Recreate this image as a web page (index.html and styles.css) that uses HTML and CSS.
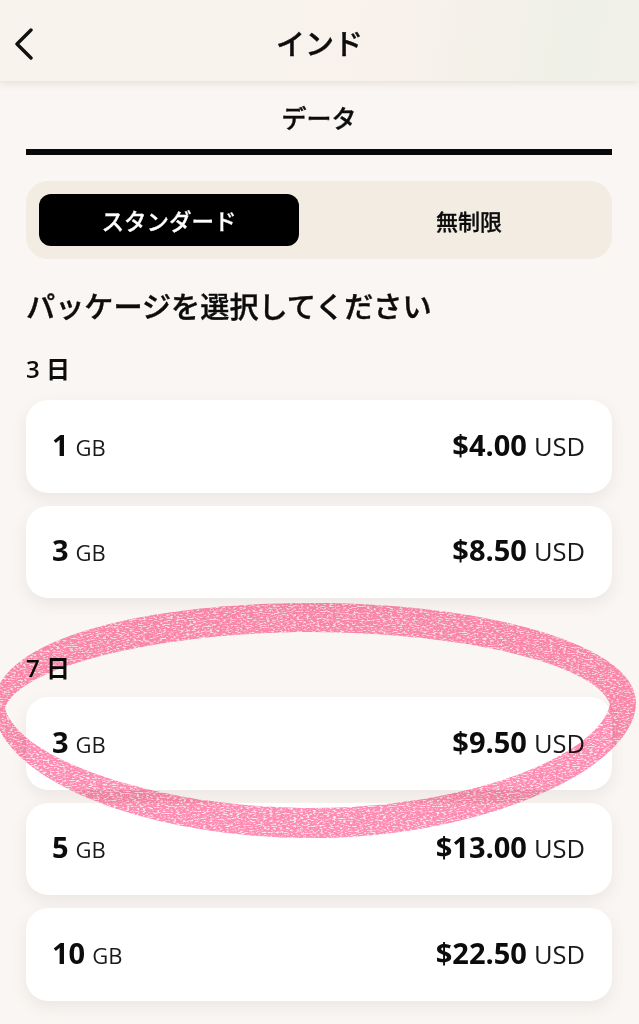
FILE: index.html
```html
<!DOCTYPE html>
<html lang="ja">
<head>
<meta charset="utf-8">
<title>インド</title>
<link rel="stylesheet" href="styles.css">
</head>
<body>
<div class="page">
  <header class="topbar">
    <svg class="back" viewBox="0 0 20 32" width="20" height="32"><path d="M17 2 L3 16 L17 30" fill="none" stroke="#111" stroke-width="3.4" stroke-linecap="round" stroke-linejoin="round"/></svg>
    <h1 class="title">インド</h1>
  </header>
  <main class="content">
    <div class="tab">データ</div>
    <div class="toggle">
      <div class="opt active">スタンダード</div>
      <div class="opt">無制限</div>
    </div>
    <h2 class="heading">パッケージを選択してください</h2>

    <h3 class="days first">3 日</h3>
    <div class="card"><div><b>1</b><span>GB</span></div><div><b>$4.00</b><span class="cur">USD</span></div></div>
    <div class="card"><div><b>3</b><span>GB</span></div><div><b>$8.50</b><span class="cur">USD</span></div></div>

    <h3 class="days second">7 日</h3>
    <div class="card"><div><b>3</b><span>GB</span></div><div><b>$9.50</b><span class="cur">USD</span></div></div>
    <div class="card"><div><b>5</b><span>GB</span></div><div><b>$13.00</b><span class="cur">USD</span></div></div>
    <div class="card"><div><b>10</b><span>GB</span></div><div><b>$22.50</b><span class="cur">USD</span></div></div>
  </main>
  <svg class="scribble" viewBox="0 0 639 260" width="639" height="260">
    <defs>
      <filter id="crayon" x="-5%" y="-10%" width="110%" height="120%">
        <feTurbulence type="fractalNoise" baseFrequency="0.3 0.85" numOctaves="3" seed="7" result="n"/>
        <feColorMatrix in="n" type="matrix" values="0 0 0 0 0  0 0 0 0 0  0 0 0 0 0  0 0 0 -4 2.9" result="a"/>
        <feComposite in="SourceGraphic" in2="a" operator="in" result="t"/>
        <feGaussianBlur in="t" stdDeviation="0.5"/>
      </filter>
      <path id="band" fill-rule="evenodd" d="M-6 116 C-6 50 140 13 312 13 C490 13 636 56 636 112 C636 180 480 248 312 248 C140 248 -6 186 -6 116 Z M5 118 C18 170 160 218 312 218 C470 218 600 165 610 114 C596 75 470 43 312 42 C165 42 20 75 5 118 Z"/>
    </defs>
    <use href="#band" class="ring-base"/>
    <use href="#band" class="ring" filter="url(#crayon)"/>
  </svg>
</div>
</body>
</html>
```

FILE: styles.css
```css
* { box-sizing: border-box; }
html, body { margin: 0; padding: 0; }
body {
  width: 639px;
  height: 1024px;
  overflow: hidden;
  background: #faf6f3;
  color: #0c0c0c;
  font-family: "Open Sans", "Noto Sans CJK JP", sans-serif;
}
.page { position: relative; height: 1024px; overflow: hidden; }
.topbar {
  height: 81px;
  display: flex;
  align-items: center;
  justify-content: center;
  position: relative;
  background: linear-gradient(100deg, #f8f3ed 0%, #f9f2ec 60%, #eff0e7 90%, #f2f1e9 100%);
  box-shadow: 0 2px 8px rgba(90, 80, 70, 0.14);
}
.back { position: absolute; left: 14px; top: 28px; }
.title {
  margin: 0;
  font: 500 29px/1 "Noto Sans CJK JP", sans-serif;
  -webkit-text-stroke: 0.4px #0c0c0c;
  padding-top: 4px;
}
.content { padding: 0 27px 0 26px; }
.tab {
  height: 74px;
  border-bottom: 6px solid #0a0a0a;
  text-align: center;
  font: 500 25px/72px "Noto Sans CJK JP", sans-serif;
  -webkit-text-stroke: 0.4px #0c0c0c;
}
.toggle {
  margin-top: 26px;
  height: 78px;
  padding: 13px;
  background: #f2ece3;
  border-radius: 22px;
  display: flex;
}
.opt {
  width: 260px;
  flex: none;
  border-radius: 12px;
  text-align: center;
  font: 500 22px/52px "Noto Sans CJK JP", sans-serif;
  -webkit-text-stroke: 0.3px currentColor;
}
.opt + .opt { flex: 1; width: auto; padding-left: 40px; }
.active { background: #000; color: #fff; font-size: 22.5px; }
.heading {
  margin: 26px 0 0;
  font: 500 29.15px/40px "Noto Sans CJK JP", sans-serif;
  -webkit-text-stroke: 0.4px #0c0c0c;
}
.days {
  margin: 0;
  font: 600 24px/30px "Open Sans", "Noto Sans CJK JP", sans-serif;
}
.first { margin-top: 29px; margin-bottom: 16px; }
.second { margin-top: 55px; margin-bottom: 14px; }
.card {
  height: 92.5px;
  margin-bottom: 13px;
  padding: 0 27px 4px 26px;
  background: #fff;
  border-radius: 22px;
  box-shadow: 0 6px 16px rgba(90, 80, 70, 0.09);
  display: flex;
  align-items: center;
  justify-content: space-between;
}
.card > div { display: flex; align-items: baseline; gap: 7px; }
.card b { font-size: 29px; font-weight: 700; }
.card span { font-size: 22px; font-weight: 400; color: #1a1a1a; }
.card .cur { font-size: 25.5px; }
.scribble { position: absolute; left: 0; top: 590px; pointer-events: none; mix-blend-mode: multiply; }
.ring-base { fill: #ffc4d8; opacity: 0.4; }
.ring { fill: #ff8ab2; }
```
